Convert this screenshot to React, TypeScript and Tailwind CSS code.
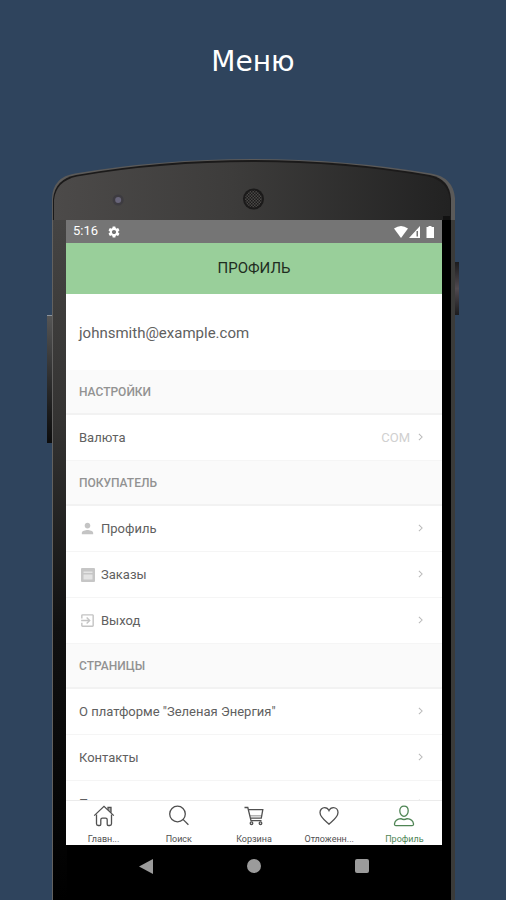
import type { ReactNode } from 'react';
import { MdExitToApp, MdPerson, MdSettings } from 'react-icons/md';

interface RowProps {
    label: string;
    icon?: ReactNode;
    value?: string;
}

/** Thin right-pointing arrow at the end of every list row. */
function Chevron() {
    return (
        <svg aria-hidden viewBox="0 0 6 10" className="h-2 w-[5px] shrink-0" fill="none" stroke="#b9b9b9" strokeWidth="1.3">
            <path d="M1 1l4 4-4 4" />
        </svg>
    );
}

function Row({ label, icon, value }: RowProps) {
    return (
        <li className="border-b border-[#f5f5f5]">
            <button type="button" className="flex h-[45px] w-full items-center px-[13px] text-left text-[13px] text-[#606060]">
                {icon && <span className="mr-[5px] flex w-[17px] justify-center text-[17px] text-[#c4c4c4]">{icon}</span>}
                <span className="flex-1">{label}</span>
                {value && <span className="mr-2 text-[#d0d0d0]">{value}</span>}
                <span className="mr-[6px] pb-[2px]">
                    <Chevron />
                </span>
            </button>
        </li>
    );
}

function Section({ title, children }: { title: string; children: ReactNode }) {
    return (
        <section>
            <h3 className="flex h-[45px] items-center border-b-2 border-[#f2f2f2] bg-[#fafafa] px-[13px] text-xs font-medium text-[#929292]">
                {title}
            </h3>
            <ul>{children}</ul>
        </section>
    );
}

function OrdersIcon() {
    return (
        <svg aria-hidden viewBox="0 0 16 16" className="size-4">
            <rect x="1" y="1" width="14" height="14" rx="1" fill="#c6c6c6" />
            <path d="M3.500 4.500h9v1.500h-9zM3.500 7.500h9v5h-9z" fill="#e4e4e4" />
        </svg>
    );
}

const tabs = [
    {
        label: 'Главн...',
        icon: (
            <>
                <path d="M1.2 10.6L11 1.4l9.8 9.2" />
                <path d="M15 4.8V2.4h3v5.4" fill="currentColor" fillOpacity=".45" />
                <path d="M3.5 9.5v9.3q0 1.7 1.7 1.7h1.4q1.2 0 1.2-1.2v-4.5q0-1.6 1.6-1.6h3.2q1.6 0 1.6 1.6v4.5q0 1.2 1.2 1.2h1.4q1.7 0 1.7-1.7V9.5" />
            </>
        ),
    },
    {
        label: 'Поиск',
        icon: (
            <>
                <circle cx="9.5" cy="9" r="7.8" />
                <path d="M15 14.400l5.400 5.400" />
            </>
        ),
    },
    {
        label: 'Корзина',
        icon: (
            <>
                <path d="M1.5 2.500h3.300l3.200 13.200h10.500M5.400 4.700h14.400l-1.500 8.500H7.600" />
                <path d="M6.800 10.800h12" strokeOpacity=".5" />
                <circle cx="8.500" cy="18.200" r="1.300" />
                <circle cx="17.500" cy="18.200" r="1.300" />
            </>
        ),
    },
    {
        label: 'Отложенн...',
        icon: <path d="M11 19.2C7.2 15.9 2 12.3 2 7.6 2 4.5 4.1 2.6 6.6 2.6c2.1 0 3.6 1.2 4.4 3 .8-1.8 2.3-3 4.4-3 2.5 0 4.6 1.9 4.6 5 0 4.7-5.2 8.3-9 11.6z" />,
    },
    {
        label: 'Профиль',
        active: true,
        icon: (
            <>
                <path d="M11 1.2c2.600 0 4.200 1.700 4.200 4.500 0 3-1.900 5.700-4.200 5.700S6.800 8.700 6.800 5.700c0-2.800 1.600-4.500 4.200-4.500z" />
                <path d="M3 20.600q-1.700 0-1.500-1.700c.4-3.200 3.400-4.900 6.400-5.200 1.900 1 4.300 1 6.200 0 3 .3 6 2 6.400 5.200q.2 1.700-1.500 1.700z" />
            </>
        ),
    },
];

function StatusBar() {
    return (
        <div className="flex h-[23px] items-center bg-[#757575] pr-[7px] pl-[7px] text-sm text-white">
            <span className="text-[13px]">5:16</span>
            <MdSettings className="ml-[9px] size-[14px]" aria-hidden />
            <svg aria-hidden viewBox="0 0 41 14" className="ml-auto h-[14px] w-[41px]" fill="#fff">
                <path d="M0 3.500Q7 -1.500 14 3.500L7 13z" />
                <path d="M26 1v12H15zM24 6h-1.500v5.500H24z" fillRule="evenodd" />
                <path d="M34.500 1h3v1H40v11h-7.500V2h2z" />
            </svg>
        </div>
    );
}

/** Curved top of the handset with the proximity sensor and the earpiece. */
function PhoneTop() {
    return (
        <svg aria-hidden viewBox="0 0 403 62" preserveAspectRatio="none" className="block h-[62px] w-full">
            <defs>
                <linearGradient id="shell" x1="0" x2="1" y1="0" y2="0">
                    <stop offset="0" stopColor="#4c4a49" />
                    <stop offset=".45" stopColor="#3d3c3b" />
                    <stop offset="1" stopColor="#222222" />
                </linearGradient>
                <pattern id="mesh" width="3" height="3" patternUnits="userSpaceOnUse">
                    <path d="M0 0h1.500v1.500H0zM1.500 1.500H3V3H1.500z" fill="#4a4846" />
                </pattern>
            </defs>
            <path d="M1 62V40Q2 19 24 15.500Q110 1 201 1T379 15.500Q401 19 403 40V62z" fill="#5b5a59" />
            <path d="M2 62V41Q4 21 25 17Q110 2 201 2T378 17Q398 21 399 41V62z" fill="#1b1a1a" />
            <path d="M3 62V42Q5 23 26 18.500Q110 4 201 4T376 18.500Q396 23 398 42V62z" fill="url(#shell)" />
            <path d="M391 58h7v4h-7z" fill="#000" fillOpacity=".5" />
            <circle cx="67" cy="42" r="5.500" fill="#3d3b40" />
            <circle cx="67" cy="42" r="3" fill="#68657a" />
            <circle cx="202" cy="41" r="10.500" fill="#1b1a1a" />
            <circle cx="202" cy="41" r="8.500" fill="url(#mesh)" />
        </svg>
    );
}

export default function App() {
    return (
        <main className="flex min-h-screen flex-col overflow-hidden bg-[#2f445d] font-['Roboto',sans-serif]">
            <h1 className="px-4 pt-[42px] pb-[76px] text-center font-['DejaVu_Sans',sans-serif] text-[28px] leading-10 text-white">
                Меню
            </h1>

            <div className="relative mx-[51px] flex flex-1 flex-col">
                {/* Side keys */}
                <span aria-hidden className="absolute top-[157px] -left-1 h-[128px] w-[5px] border-t border-[#8d949c] bg-linear-to-b from-[#555] to-[#0c0c0c]" />
                <span aria-hidden className="absolute top-[104px] -right-1 h-[53px] w-1 bg-linear-to-b from-[#1c1c1e] via-[#504a50] to-[#1c1c1e]" />

                <PhoneTop />

                <div className="ml-px flex flex-1 flex-col border-l border-[#626160] bg-[linear-gradient(to_right,transparent_14px,#000_14px),linear-gradient(to_bottom,#454443,#343332_30%,#111_60%,#000)]">
                    <div className="flex flex-1 flex-col border-r-4 border-[#3b3b39] pr-[9px] pl-[13px]">
                        {/* App screen */}
                        <div className="flex flex-col bg-white">
                            <StatusBar />
                            <header className="flex h-[51px] items-center justify-center bg-[#99cf9a]">
                                <h2 className="text-[15px] text-[#1f2d1f]">ПРОФИЛЬ</h2>
                            </header>

                            <p className="flex h-[76px] items-center px-[13px] pt-[2px] text-[15px] text-[#606060]">johnsmith@example.com</p>

                            <Section title="НАСТРОЙКИ">
                                <Row label="Валюта" value="COM" />
                            </Section>
                            <Section title="ПОКУПАТЕЛЬ">
                                <Row label="Профиль" icon={<MdPerson />} />
                                <Row label="Заказы" icon={<OrdersIcon />} />
                                <Row label="Выход" icon={<MdExitToApp />} />
                            </Section>
                            <Section title="СТРАНИЦЫ">
                                <Row label={'О платформе "Зеленая Энергия"'} />
                                <Row label="Контакты" />
                            </Section>
                            {/* Next row, cut off by the tab bar */}
                            <ul className="h-[19px] overflow-hidden">
                                <Row label="П" />
                            </ul>

                            <nav className="grid h-[45px] grid-cols-5 border-t border-[#ebebeb]">
                                {tabs.map((tab) => (
                                    <a
                                        key={tab.label}
                                        href="#"
                                        className={`flex flex-col items-center pt-[4px] ${tab.active ? 'text-[#4f8555]' : 'text-[#505050]'}`}
                                    >
                                        <svg aria-hidden viewBox="0 0 22 22" className="size-[22px]" fill="none" stroke="currentColor" strokeWidth="1.300">
                                            {tab.icon}
                                        </svg>
                                        <span className="mt-[6px] text-[9px] leading-[12px]">{tab.label}</span>
                                    </a>
                                ))}
                            </nav>
                        </div>

                        {/* System navigation */}
                        <div className="flex flex-1 items-start justify-center gap-[94px] pt-[14px] pb-[26px]">
                            <button type="button" aria-label="Назад">
                                <svg aria-hidden viewBox="0 0 14 15" className="h-[15px] w-[14px]" fill="#9b9b9b">
                                    <path d="M0 7.500L14 0v15z" />
                                </svg>
                            </button>
                            <button type="button" aria-label="Домой" className="size-[14px] rounded-full bg-[#9b9b9b]" />
                            <button type="button" aria-label="Недавние" className="size-[14px] rounded-xs bg-[#9b9b9b]" />
                        </div>
                    </div>
                </div>
            </div>
        </main>
    );
}
